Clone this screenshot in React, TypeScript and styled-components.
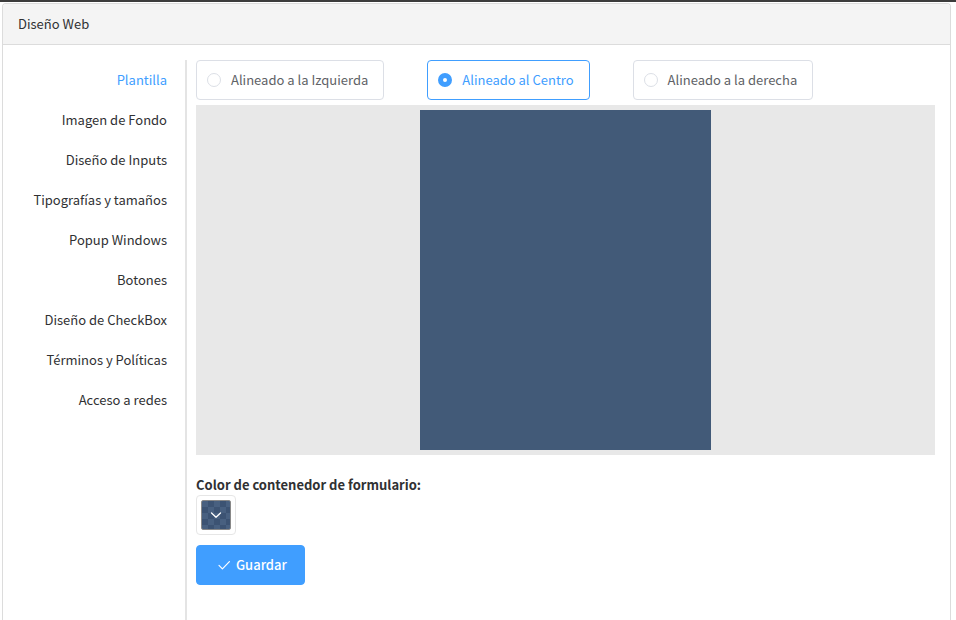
import React, { useState } from "react";
import styled, { createGlobalStyle } from "styled-components";

const GlobalStyle = createGlobalStyle`
  *, *::before, *::after { box-sizing: border-box; }
  body {
    margin: 0;
    background: #fff;
    color: #303133;
    font-family: "Noto Sans CJK SC", "Noto Sans", sans-serif;
    font-size: 13px;
    line-height: 20px;
  }
  button, input { font: inherit; }
`;

const Page = styled.div`
  display: flex;
  flex-direction: column;
  min-height: 100vh;
  border-top: 2px solid #3c3c3c;
  padding: 1px 5px 0 2px;
`;

const Card = styled.section`
  flex: 1;
  display: flex;
  flex-direction: column;
  border: 1px solid #dcdcdc;
  border-bottom: 0;
  border-radius: 4px 4px 0 0;
`;

const CardHeader = styled.header`
  padding: 10px 15px;
  border-bottom: 1px solid #dcdcdc;
  background: #f4f4f4;
  border-radius: 3px 3px 0 0;
`;

const CardTitle = styled.h1`
  margin: 0;
  font-size: 13px;
  line-height: 20px;
  font-weight: 400;
`;

const CardBody = styled.div`
  flex: 1;
  display: flex;
  padding: 15px 15px 0;
`;

const Tabs = styled.nav`
  flex: 0 0 169px;
  display: flex;
  flex-direction: column;
  padding-right: 18px;
  border-right: 2px solid #e4e4e4;
  text-align: right;
`;

const Tab = styled.a<{ $active: boolean }>`
  line-height: 40px;
  white-space: nowrap;
  text-decoration: none;
  color: ${(p) => (p.$active ? "#409eff" : "#303133")};
`;

const Content = styled.main`
  flex: 1;
  min-width: 0;
  padding-left: 9px;
`;

const Options = styled.div`
  display: flex;
  flex-wrap: wrap;
  gap: 5px 43px;
  margin-bottom: 5px;
`;

const Option = styled.label<{ $checked: boolean }>`
  display: flex;
  align-items: center;
  gap: 10px;
  height: 40px;
  padding: 0 15px 0 10px;
  border: 1px solid ${(p) => (p.$checked ? "#409eff" : "#dcdfe6")};
  border-radius: 4px;
  color: ${(p) => (p.$checked ? "#409eff" : "#606266")};
  white-space: nowrap;
  cursor: pointer;
`;

const Radio = styled.input`
  appearance: none;
  width: 14px;
  height: 14px;
  margin: 0;
  border: 1px solid #dcdfe6;
  border-radius: 50%;
  background: #fff;
  cursor: pointer;

  &:checked {
    border: 5px solid #409eff;
  }
`;

const Preview = styled.div<{ $align: string }>`
  display: flex;
  justify-content: ${(p) => p.$align};
  height: 350px;
  padding: 5px;
  margin-bottom: 20px;
  background: #e8e8e8;
`;

const FormArea = styled.div`
  width: 40%;
  background: #425a78;
`;

const FieldLabel = styled.label`
  display: block;
  width: fit-content;
  font-weight: 700;
`;

const ColorButton = styled.button`
  display: block;
  width: 40px;
  height: 40px;
  padding: 4px;
  border: 1px solid #e6e6e6;
  border-radius: 4px;
  background: #fff;
  cursor: pointer;
`;

const Swatch = styled.span`
  display: flex;
  align-items: center;
  justify-content: center;
  height: 30px;
  border: 1px solid #888;
  border-radius: 2px;
  color: #fff;
  background: repeating-conic-gradient(#3c5373 0 25%, #486080 0 50%) 0 0 / 12px 12px;
`;

const SaveButton = styled.button`
  display: flex;
  align-items: center;
  gap: 5px;
  height: 40px;
  margin-top: 10px;
  padding: 0 17px 0 20px;
  border: 1px solid #409eff;
  border-radius: 4px;
  background: #409eff;
  color: #fff;
  font-weight: 500;
  cursor: pointer;
`;

const sections = [
  "Plantilla",
  "Imagen de Fondo",
  "Diseño de Inputs",
  "Tipografías y tamaños",
  "Popup Windows",
  "Botones",
  "Diseño de CheckBox",
  "Términos y Políticas",
  "Acceso a redes",
];

const alignments = [
  { value: "flex-start", text: "Alineado a la Izquierda" },
  { value: "center", text: "Alineado al Centro" },
  { value: "flex-end", text: "Alineado a la derecha" },
];

const ChevronIcon = () => (
  <svg width="12" height="12" viewBox="0 0 12 12" fill="none" stroke="currentColor" strokeWidth="1.3" aria-hidden="true">
    <path d="M1.5 4 6 8.3 10.5 4" strokeLinecap="round" strokeLinejoin="round" />
  </svg>
);

const CheckIcon = () => (
  <svg width="14" height="14" viewBox="0 0 14 14" fill="none" stroke="currentColor" strokeWidth="1.2" aria-hidden="true">
    <path d="M2 7.4 5.4 10.8 12.4 3.6" strokeLinecap="round" strokeLinejoin="round" />
  </svg>
);

export default function App() {
  const [section, setSection] = useState(sections[0]);
  const [align, setAlign] = useState("center");

  return (
    <>
      <GlobalStyle />
      <Page>
        <Card>
          <CardHeader>
            <CardTitle>Diseño Web</CardTitle>
          </CardHeader>
          <CardBody>
            <Tabs>
              {sections.map((name) => (
                <Tab
                  key={name}
                  href="#"
                  $active={name === section}
                  aria-current={name === section ? "page" : undefined}
                  onClick={(e) => {
                    e.preventDefault();
                    setSection(name);
                  }}
                >
                  {name}
                </Tab>
              ))}
            </Tabs>
            <Content>
              <Options role="radiogroup">
                {alignments.map(({ value, text }) => (
                  <Option key={value} $checked={value === align}>
                    <Radio
                      type="radio"
                      name="alignment"
                      value={value}
                      checked={value === align}
                      onChange={() => setAlign(value)}
                    />
                    {text}
                  </Option>
                ))}
              </Options>
              <Preview $align={align}>
                <FormArea />
              </Preview>
              <FieldLabel htmlFor="form-color">Color de contenedor de formulario:</FieldLabel>
              <ColorButton id="form-color" type="button">
                <Swatch>
                  <ChevronIcon />
                </Swatch>
              </ColorButton>
              <SaveButton type="button">
                <CheckIcon />
                Guardar
              </SaveButton>
            </Content>
          </CardBody>
        </Card>
      </Page>
    </>
  );
}
